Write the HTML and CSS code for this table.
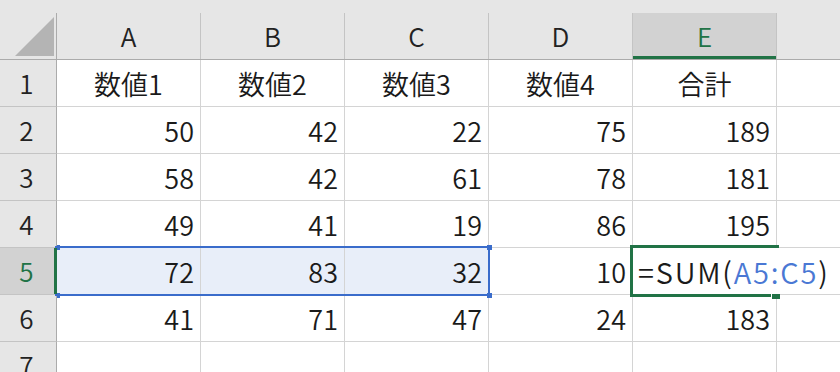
FILE: index.html
```html
<!DOCTYPE html>
<html lang="ja">
<head>
<meta charset="utf-8">
<link rel="stylesheet" href="styles.css">
</head>
<body>
<div class="sheet">
  <div class="grid">
    <div class="corner"><span class="corner-box"><span class="tri"></span></span></div>
    <div class="colhead"><span>A</span></div>
    <div class="colhead"><span>B</span></div>
    <div class="colhead"><span>C</span></div>
    <div class="colhead"><span>D</span></div>
    <div class="colhead active"><span>E</span></div>
    <div class="colhead last"><span></span></div>

    <div class="rowhead">1</div>
    <div class="cell c">数値1</div>
    <div class="cell c">数値2</div>
    <div class="cell c">数値3</div>
    <div class="cell c">数値4</div>
    <div class="cell c">合計</div>
    <div class="cell last"></div>

    <div class="rowhead">2</div>
    <div class="cell">50</div>
    <div class="cell">42</div>
    <div class="cell">22</div>
    <div class="cell">75</div>
    <div class="cell">189</div>
    <div class="cell last"></div>

    <div class="rowhead">3</div>
    <div class="cell">58</div>
    <div class="cell">42</div>
    <div class="cell">61</div>
    <div class="cell">78</div>
    <div class="cell">181</div>
    <div class="cell last"></div>

    <div class="rowhead">4</div>
    <div class="cell">49</div>
    <div class="cell">41</div>
    <div class="cell">19</div>
    <div class="cell">86</div>
    <div class="cell">195</div>
    <div class="cell last"></div>

    <div class="rowhead active">5</div>
    <div class="cell sel">72</div>
    <div class="cell sel">83</div>
    <div class="cell sel">32</div>
    <div class="cell">10</div>
    <div class="cell"></div>
    <div class="cell last"></div>

    <div class="rowhead">6</div>
    <div class="cell">41</div>
    <div class="cell">71</div>
    <div class="cell">47</div>
    <div class="cell">24</div>
    <div class="cell">183</div>
    <div class="cell last"></div>

    <div class="rowhead row7">7</div>
    <div class="cell"></div>
    <div class="cell"></div>
    <div class="cell"></div>
    <div class="cell"></div>
    <div class="cell"></div>
    <div class="cell last"></div>
  </div>

  <div class="selection">
    <span class="handle h-tl"></span>
    <span class="handle h-tr"></span>
    <span class="handle h-bl"></span>
    <span class="handle h-br"></span>
  </div>

  <div class="editor">=SUM(<span class="ref">A5:C5</span>)</div>
  <div class="active-frame"></div>
  <div class="fill-handle"></div>
</div>
</body>
</html>
```

FILE: styles.css
```css
* { box-sizing: border-box; }

html, body {
  margin: 0;
  padding: 0;
  background: #ffffff;
}

body {
  font-family: "Noto Sans CJK JP", "Noto Sans", sans-serif;
  font-weight: 350;
  color: #1a1a1a;
  width: 840px;
  height: 372px;
  overflow: hidden;
}

.sheet {
  position: relative;
  width: 840px;
  height: 372px;
}

.grid {
  display: grid;
  grid-template-columns: 57px repeat(5, 144px) 1fr;
  grid-template-rows: 60px repeat(6, 47px) 1fr;
  height: 372px;
}

.corner {
  background: #e6e6e6;
  padding-top: 13px;
  border-bottom: 1px solid #ababab;
}

.corner-box {
  display: flex;
  justify-content: flex-end;
  align-items: flex-end;
  height: 46px;
  border-right: 1px solid #ababab;
  padding: 0 2px 3px 0;
}

.tri {
  width: 39px;
  height: 39px;
  background: #b4b4b4;
  clip-path: polygon(100% 0, 100% 100%, 0 100%);
}

.colhead {
  background: #e6e6e6;
  padding-top: 13px;
  border-bottom: 1px solid #ababab;
  font-size: 26px;
  color: #222222;
}

.colhead > span {
  display: flex;
  align-items: center;
  justify-content: center;
  height: 46px;
  border-right: 1px solid #c4c4c4;
  padding-bottom: 2px;
}

.colhead.last > span { border-right: none; }

.colhead.active > span {
  background: #d2d2d2;
  color: #217346;
  box-shadow: inset 0 -3px 0 #217346;
}

.rowhead {
  background: #e6e6e6;
  border-right: 1px solid #ababab;
  border-bottom: 1px solid #c4c4c4;
  display: flex;
  align-items: center;
  justify-content: center;
  font-size: 26px;
  line-height: 1;
  color: #222222;
  padding-right: 3px;
}

.rowhead.row7 {
  align-items: flex-start;
  padding-top: 10px;
}

.rowhead.active {
  background: #d2d2d2;
  color: #217346;
  border-right-color: #217346;
  box-shadow: inset -2px 0 0 #217346;
}

.cell {
  border-right: 1px solid #d4d4d4;
  border-bottom: 1px solid #d4d4d4;
  display: flex;
  align-items: center;
  justify-content: flex-end;
  padding-right: 6px;
  font-size: 27px;
  line-height: 1;
}

.cell.c {
  justify-content: center;
  padding-right: 0;
}

.cell.last { border-right: none; }

.cell.sel { background: #e8eef9; }

.selection {
  position: absolute;
  left: 55px;
  top: 246px;
  width: 435px;
  height: 50px;
  border-top: 2px solid #3a6ccb;
  border-right: 2px solid #3a6ccb;
  border-bottom: 2px solid #3a6ccb;
}

.handle {
  position: absolute;
  width: 5px;
  height: 5px;
  background: #3a6ccb;
}

.h-tl { left: 2px; top: -3px; width: 3px; }
.h-tr { right: -4px; top: -3px; }
.h-bl { left: 2px; bottom: -4px; width: 3px; }
.h-br { right: -4px; bottom: -4px; }

.editor {
  position: absolute;
  left: 633px;
  top: 248px;
  right: 0;
  height: 46px;
  background: #ffffff;
  font-size: 29px;
  line-height: 46px;
  letter-spacing: 1.8px;
  padding-left: 5px;
  white-space: nowrap;
}

.ref { color: #4a78d4; }

.active-frame {
  position: absolute;
  left: 630px;
  top: 245px;
  width: 149px;
  height: 52px;
  border: 3px solid #217346;
  border-right: none;
}

.fill-handle {
  position: absolute;
  left: 771px;
  top: 294px;
  width: 9px;
  height: 5px;
  background: #217346;
  border-left: 1px solid #ffffff;
}
```
